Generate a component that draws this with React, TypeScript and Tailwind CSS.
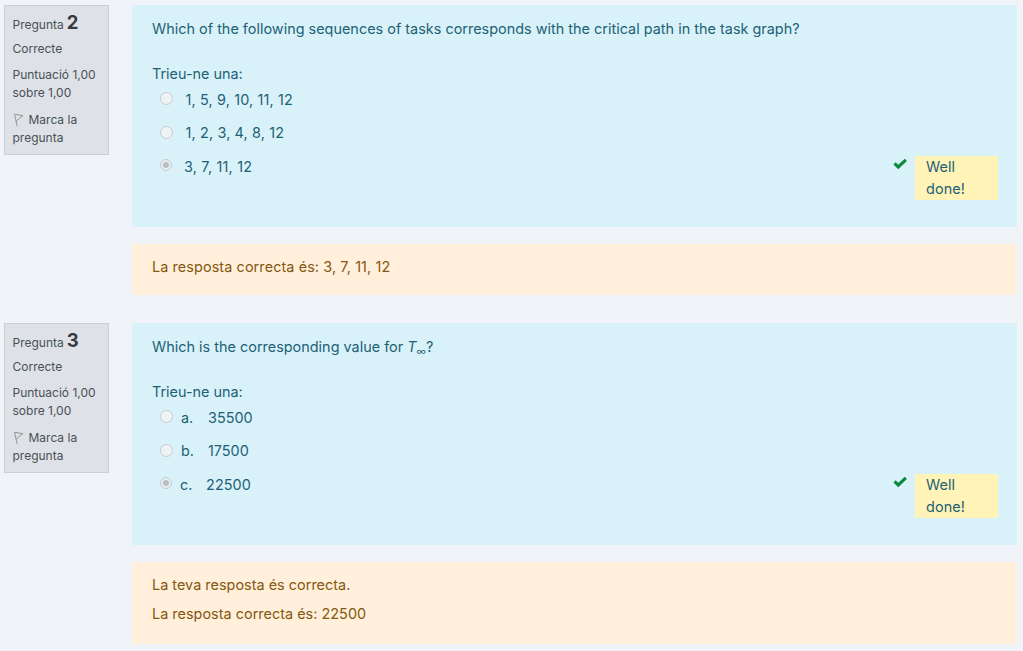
type Option = { label?: string; text: string; selected?: boolean };

function Flag() {
  return (
    <svg viewBox="0 0 12 16" className="inline-block w-[11px] h-[14px] mr-[5px] align-[-3px]" fill="none" stroke="#868b90" strokeWidth="1">
      <path d="M1.5 1.5 L4.5 15" />
      <path d="M1.5 1.5 L11 3 L7 6 L3 9.5" />
    </svg>
  );
}

function Radio({ selected }: { selected?: boolean }) {
  if (selected) {
    return (
      <span className="flex items-center justify-center w-[12px] h-[12px] rounded-full border border-[#c6cbcf] bg-[#e9eef0]">
        <span className="w-[6px] h-[6px] rounded-full bg-[#b9bec2]" />
      </span>
    );
  }
  return <span className="block w-[13px] h-[13px] rounded-full border border-[#c6cbcf] bg-[#eef3f5]" />;
}

function Info({ num }: { num: number }) {
  return (
    <div className="w-[105px] h-[150px] shrink-0 border border-[#c8cfd5] bg-[#dee2e6] pl-[7.5px] pr-2 pt-[4px] text-[12px] leading-[18px] text-[#495057]">
      <div className="h-[24px] flex items-baseline">
        <span>Pregunta</span>
        <span className="ml-[3px] text-[18.5px] leading-[24px] font-bold text-[#343a40]">{num}</span>
      </div>
      <div className="mt-[6px]">Correcte</div>
      <div className="mt-[8px]">Puntuació 1,00 sobre 1,00</div>
      <div className="mt-[9px]">
        <Flag />
        Marca la pregunta
      </div>
    </div>
  );
}

function Question({ num, title, options, feedback, tight }: { num: number; title: React.ReactNode; options: Option[]; feedback: string[]; tight?: boolean }) {
  return (
    <div className="flex">
      <Info num={num} />
      <div className="ml-[23px] flex-1 min-w-0">
        <div className="h-[222px] bg-[#d9f2fa] pl-5 pr-[19px] pt-[13px] text-[#1d6175]">
          <div className="leading-[22px] tracking-[0.02px]">{title}</div>
          <div className="mt-[23px] leading-[22px]">Trieu-ne una:</div>
          <div className="mt-[3.75px]">
            {options.map((o) => (
              <div key={o.text} className="h-[33.5px] flex items-start pl-2">
                <div className="w-[14px] pt-[3.5px] flex justify-center -translate-x-[1px]">
                  <Radio selected={o.selected} />
                </div>
                {o.label ? (
                  <span className={`flex leading-[22px] ${o.selected ? "ml-[6px] tracking-[0.1px]" : "ml-[7px]"}`}>
                    <span className={o.selected ? "w-[26px]" : "w-[27px]"}>{o.label}</span>
                    <span>{o.text}</span>
                  </span>
                ) : (
                  <span className={`leading-[22px] ${o.selected ? "ml-[10px] tracking-[0.2px]" : "ml-[11.5px] tracking-[0.15px]"}`}>{o.text}</span>
                )}
                {o.selected && (
                  <div className="ml-auto flex items-start">
                    <svg viewBox="0 0 16 12" className="w-[15px] h-[12px] mt-[2px] mr-[7px]" fill="#0a8a3c">
                      <path d="M0.5 6.5 L2.8 4 L5.6 6.7 L12.6 0.4 L14.8 2.8 L5.6 11.6 Z" />
                    </svg>
                    <div className="w-[83px] h-[44px] bg-[#fff3b8] pl-[11px] leading-[22px] tracking-[0.1px]">
                      Well
                      <br />
                      done!
                    </div>
                  </div>
                )}
              </div>
            ))}
          </div>
        </div>
        <div className={`mt-[17px] bg-[#ffefdb] px-5 pt-[12px] pb-[17px] text-[#85570f] ${tight ? "tracking-[0.03px]" : "tracking-[0.1px]"}`}>
          {feedback.map((f, i) => (
            <div key={f} className={`leading-[22px] ${i > 0 ? "mt-[7px] pb-[2px]" : ""}`}>
              {f}
            </div>
          ))}
        </div>
      </div>
    </div>
  );
}

export default function App() {
  return (
    <div className="h-[651px] overflow-hidden bg-[#f0f4f9] pl-1 pr-[6px] pt-[5px] text-[14.4px] font-['Inter',sans-serif]">
      <Question
        num={2}
        title="Which of the following sequences of tasks corresponds with the critical path in the task graph?"
        options={[
          { text: "1, 5, 9, 10, 11, 12" },
          { text: "1, 2, 3, 4, 8, 12" },
          { text: "3, 7, 11, 12", selected: true },
        ]}
        feedback={["La resposta correcta és: 3, 7, 11, 12"]}
      />
      <div className="mt-[28px]">
        <Question
          num={3}
          tight
          title={
            <>
              Which is the corresponding value for <i>T</i>
              <sub className="text-[10px]">∞</sub>?
            </>
          }
          options={[
            { label: "a.", text: "35500" },
            { label: "b.", text: "17500" },
            { label: "c.", text: "22500", selected: true },
          ]}
          feedback={["La teva resposta és correcta.", "La resposta correcta és: 22500"]}
        />
      </div>
    </div>
  );
}
